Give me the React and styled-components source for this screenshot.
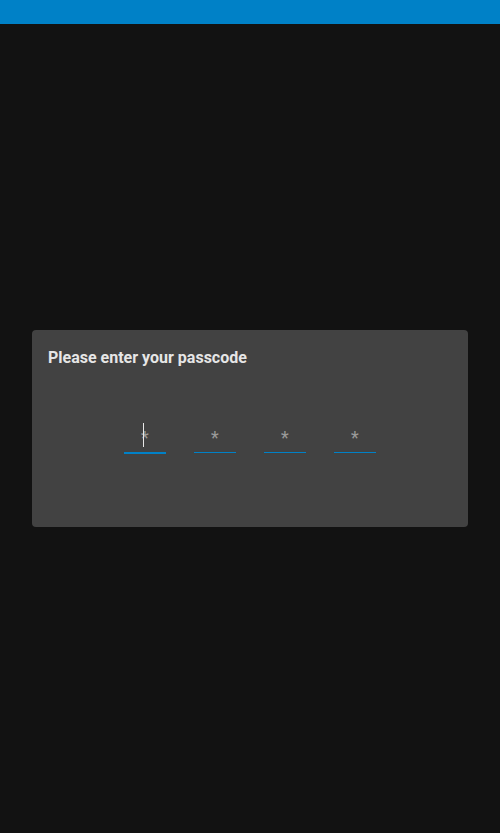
import React from 'react';
import styled, { createGlobalStyle } from 'styled-components';

const GlobalStyle = createGlobalStyle`
  html, body {
    margin: 0;
    padding: 0;
    background-color: #121212;
    font-family: Roboto, "Noto Sans", sans-serif;
  }
`;

const StyledPage = styled.div`
  display: flex;
  flex-direction: column;
  width: 500px;
  height: 833px;
  background-color: #121212;
`;
const StyledTopBar = styled.div`
  height: 24px;
  flex-shrink: 0;
  background-color: #0081c7;
`;
const StyledBody = styled.div`
  flex: 1;
  display: flex;
  align-items: flex-start;
  justify-content: center;
  padding-top: 306px;
`;
const StyledDialog = styled.div`
  width: 436px;
  height: 197px;
  box-sizing: border-box;
  padding: 16px;
  border-radius: 4px;
  background-color: #424242;
  display: flex;
  flex-direction: column;
`;
const StyledTitle = styled.h2`
  margin: 0;
  height: 24px;
  font-size: 16px;
  line-height: 24px;
  font-weight: 700;
  color: #e6e6e6;
`;
const StyledCodeRow = styled.div`
  display: flex;
  align-items: flex-start;
  justify-content: center;
  gap: 28px;
  margin-top: 52px;
`;
const StyledDigit = styled.div`
  position: relative;
  width: 42px;
  display: flex;
  flex-direction: column;
`;
const StyledField = styled.div`
  height: 30px;
  display: flex;
  align-items: center;
  justify-content: center;
`;
const StyledUnderline = styled.div`
  height: ${({ focused }) => (focused ? '2px' : '1px')};
  background-color: #0081c7;
`;
const StyledPlaceholder = styled.span`
  font-size: 18px;
  line-height: 18px;
  color: #9a9a9a;
  margin-top: 2px;
`;
const StyledCaret = styled.span`
  position: absolute;
  left: 19px;
  top: 1px;
  width: 1px;
  height: 24px;
  background-color: #e8e8e8;
`;

class App extends React.Component {
  render() {
    const digits = [0, 1, 2, 3];
    return (
      <>
        <GlobalStyle />
        <StyledPage>
          <StyledTopBar />
          <StyledBody>
            <StyledDialog>
              <StyledTitle>Please enter your passcode</StyledTitle>
              <StyledCodeRow>
                {digits.map((d) => (
                  <StyledDigit key={d}>
                    <StyledField>
                      <StyledPlaceholder>*</StyledPlaceholder>
                    </StyledField>
                    <StyledUnderline focused={d === 0} />
                    {d === 0 && <StyledCaret />}
                  </StyledDigit>
                ))}
              </StyledCodeRow>
            </StyledDialog>
          </StyledBody>
        </StyledPage>
      </>
    );
  }
}

export default App;
